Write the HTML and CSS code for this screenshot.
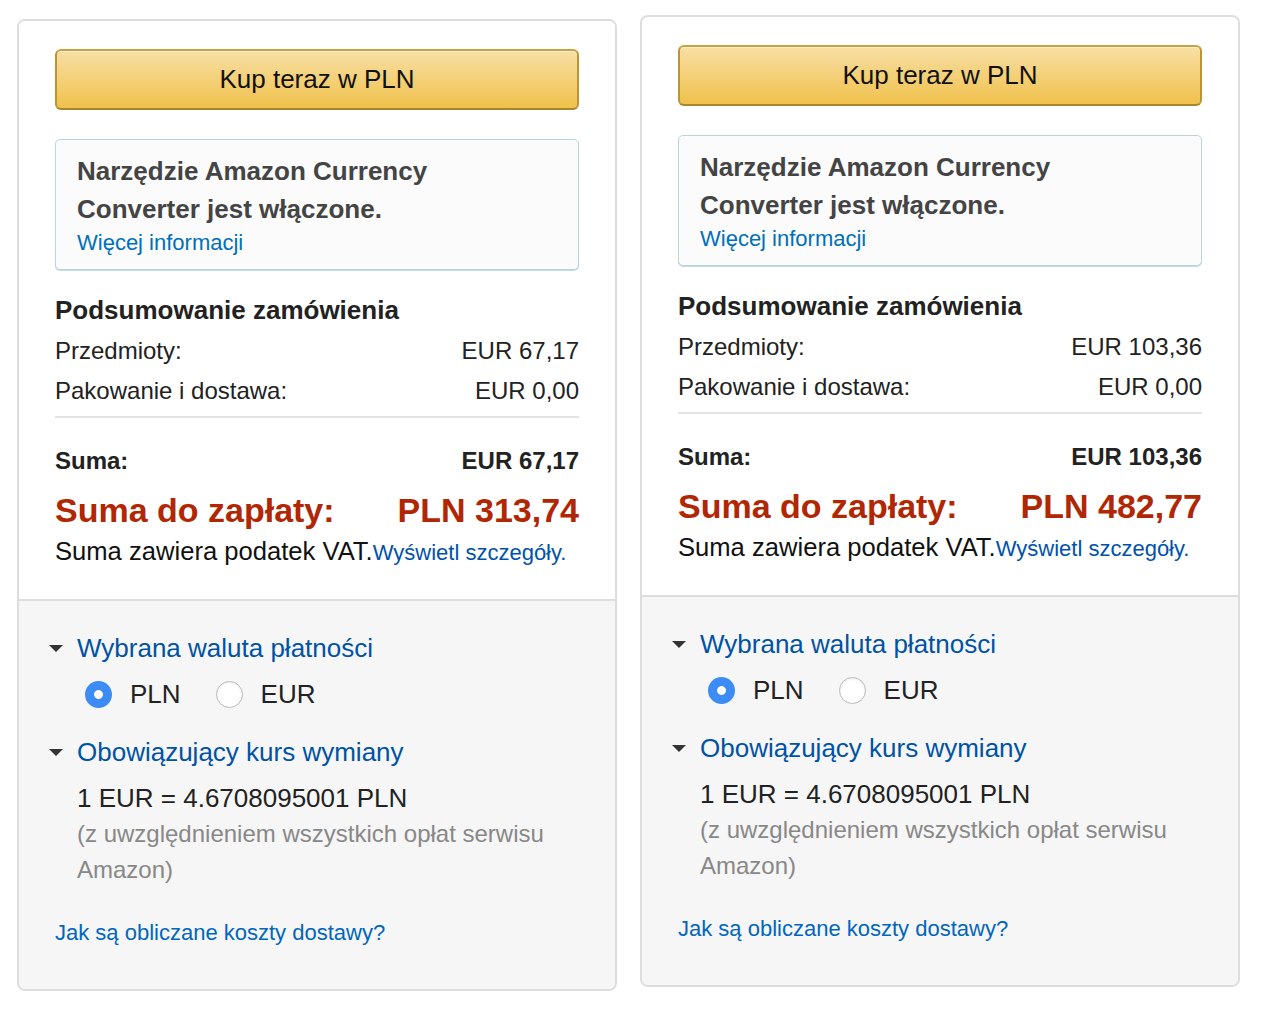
FILE: index.html
```html
<!DOCTYPE html>
<html lang="pl">
<head>
    <meta charset="UTF-8">
    <meta name="viewport" content="width=device-width, initial-scale=1.0">
    <title>Podsumowanie zamówienia</title>
    <link rel="stylesheet" href="styles.css">
</head>
<body>

    <div class="page">

        <!-- Order 1 -->
        <section class="card card-low">
            <div class="card-top">
                <button class="buy-btn">Kup teraz w PLN</button>

                <div class="info-box">
                    <h4>Narzędzie Amazon Currency Converter jest włączone.</h4>
                    <a href="#" class="info-link">Więcej informacji</a>
                </div>

                <h3 class="summary-title">Podsumowanie zamówienia</h3>
                <div class="row"><span>Przedmioty:</span><span>EUR 67,17</span></div>
                <div class="row"><span>Pakowanie i dostawa:</span><span>EUR 0,00</span></div>
                <hr class="divider">
                <div class="row row-total"><span>Suma:</span><span>EUR 67,17</span></div>
                <div class="row row-grand"><span>Suma do zapłaty:</span><span>PLN 313,74</span></div>
                <p class="vat">Suma zawiera podatek VAT.<a href="#" class="vat-link">Wyświetl szczegóły.</a></p>
            </div>

            <div class="card-bottom">
                <div class="expander"><span class="caret"></span>Wybrana waluta płatności</div>
                <div class="radios">
                    <label class="option"><span class="radio checked"></span>PLN</label>
                    <label class="option"><span class="radio"></span>EUR</label>
                </div>
                <div class="expander expander-second"><span class="caret"></span>Obowiązujący kurs wymiany</div>
                <div class="rate">1 EUR = 4.6708095001 PLN</div>
                <div class="rate-note">(z uwzględnieniem wszystkich opłat serwisu Amazon)</div>
                <a href="#" class="shipping-link">Jak są obliczane koszty dostawy?</a>
            </div>
        </section>

        <!-- Order 2 -->
        <section class="card">
            <div class="card-top">
                <button class="buy-btn">Kup teraz w PLN</button>

                <div class="info-box">
                    <h4>Narzędzie Amazon Currency Converter jest włączone.</h4>
                    <a href="#" class="info-link">Więcej informacji</a>
                </div>

                <h3 class="summary-title">Podsumowanie zamówienia</h3>
                <div class="row"><span>Przedmioty:</span><span>EUR 103,36</span></div>
                <div class="row"><span>Pakowanie i dostawa:</span><span>EUR 0,00</span></div>
                <hr class="divider">
                <div class="row row-total"><span>Suma:</span><span>EUR 103,36</span></div>
                <div class="row row-grand"><span>Suma do zapłaty:</span><span>PLN 482,77</span></div>
                <p class="vat">Suma zawiera podatek VAT.<a href="#" class="vat-link">Wyświetl szczegóły.</a></p>
            </div>

            <div class="card-bottom">
                <div class="expander"><span class="caret"></span>Wybrana waluta płatności</div>
                <div class="radios">
                    <label class="option"><span class="radio checked"></span>PLN</label>
                    <label class="option"><span class="radio"></span>EUR</label>
                </div>
                <div class="expander expander-second"><span class="caret"></span>Obowiązujący kurs wymiany</div>
                <div class="rate">1 EUR = 4.6708095001 PLN</div>
                <div class="rate-note">(z uwzględnieniem wszystkich opłat serwisu Amazon)</div>
                <a href="#" class="shipping-link">Jak są obliczane koszty dostawy?</a>
            </div>
        </section>

    </div>

</body>
</html>
```

FILE: styles.css
```css
/* Basic Styles */
body {
    font-family: "Liberation Sans", Arial, sans-serif;
    margin: 0;
    padding: 0;
    background-color: #fff;
    color: #222;
}

a {
    text-decoration: none;
}

.page {
    display: flex;
    align-items: flex-start;
    gap: 23px;
    padding: 15px 0 0 17px;
}

/* Card */
.card {
    width: 600px;
    box-sizing: border-box;
    border: 2px solid #dddddd;
    border-radius: 8px;
    overflow: hidden;
}

.card-low {
    margin-top: 4px;
}

.card-top {
    padding: 28px 36px 29px;
    background-color: #fff;
}

.buy-btn {
    display: block;
    width: 100%;
    height: 61px;
    box-sizing: border-box;
    margin: 0;
    padding: 0;
    border: 2px solid;
    border-color: #c9a23f #bb9434 #a9862d;
    border-radius: 6px;
    background: linear-gradient(to bottom, #f7dfa5, #f0c14b);
    box-shadow: inset 0 1px 0 rgba(255, 255, 255, 0.5);
    font-family: inherit;
    font-size: 26px;
    line-height: 57px;
    color: #111;
    cursor: pointer;
}

.info-box {
    margin-top: 29px;
    padding: 12px 21px 11px;
    border: 1px solid #bcd3de;
    border-radius: 5px;
    background-color: #fbfbfb;
    box-shadow: 0 1px 0 #c9d9e1;
}

.info-box h4 {
    margin: 0;
    font-size: 26px;
    line-height: 38px;
    font-weight: bold;
    color: #444;
}

.info-link {
    display: block;
    font-size: 22px;
    line-height: 30px;
    color: #0070ba;
}

.summary-title {
    margin: 23px 0 4px;
    font-size: 26px;
    line-height: 34px;
    font-weight: bold;
    color: #222;
}

.row {
    display: flex;
    justify-content: space-between;
    font-size: 24px;
    line-height: 40px;
    color: #222;
}

.divider {
    margin: 5px 0 0;
    border: none;
    height: 2px;
    background-color: #e3e3e3;
}

.row-total {
    margin-top: 23px;
    font-weight: bold;
}

.row-grand {
    margin-top: 8px;
    font-size: 34px;
    line-height: 42px;
    font-weight: bold;
    color: #b12704;
}

.vat {
    margin: 3px 0 0;
    font-size: 25.6px;
    line-height: 34px;
    color: #111;
}

.vat-link {
    font-size: 22px;
    color: #0052ad;
}

/* Bottom part */
.card-bottom {
    padding: 29px 36px 41px;
    border-top: 2px solid #dddddd;
    background-color: #f6f6f6;
}

.expander {
    display: flex;
    align-items: center;
    font-size: 26px;
    line-height: 36px;
    color: #0052a5;
}

.expander-second {
    margin-top: 22px;
}

.caret {
    width: 0;
    height: 0;
    margin: 0 14px 0 -6px;
    border-left: 7px solid transparent;
    border-right: 7px solid transparent;
    border-top: 7px solid #333;
}

.radios {
    display: flex;
    align-items: center;
    gap: 35px;
    margin: 10px 0 0 30px;
}

.option {
    display: flex;
    align-items: center;
    gap: 18px;
    font-size: 26px;
    line-height: 36px;
    color: #222;
}

.radio {
    width: 27px;
    height: 27px;
    box-sizing: border-box;
    border-radius: 50%;
    border: 1px solid #b9b9b9;
    background-color: #fff;
    box-shadow: inset 0 1px 2px rgba(0, 0, 0, 0.08);
}

.radio.checked {
    border: none;
    background: radial-gradient(circle, #fff 0, #fff 4px, #3d8cf5 4.8px);
    box-shadow: none;
}

.rate {
    margin: 10px 0 0 22px;
    font-size: 26px;
    line-height: 36px;
    color: #222;
}

.rate-note {
    margin-left: 22px;
    font-size: 24px;
    line-height: 36px;
    color: #888;
}

.shipping-link {
    display: block;
    margin-top: 30px;
    font-size: 22px;
    line-height: 30px;
    color: #0066c0;
}
```
